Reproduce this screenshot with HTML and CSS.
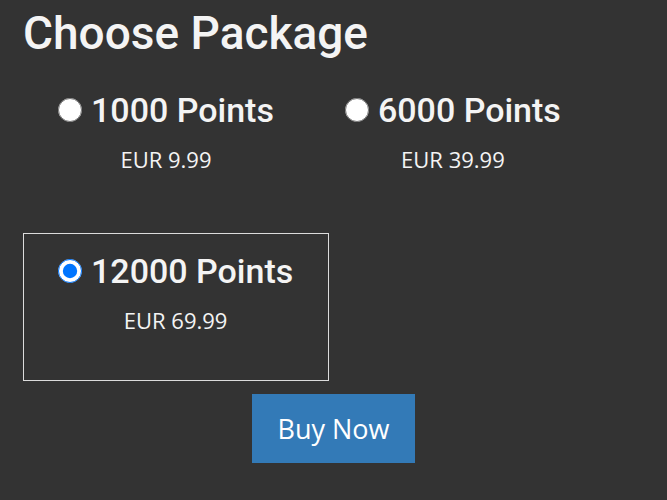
FILE: index.html
```html
<!DOCTYPE html>
<html>
<head>
<meta charset="utf-8">
<link rel="stylesheet" href="styles.css">
</head>
<body>
<div class="page">
  <h1 class="title">Choose Package</h1>
  <div class="packages">
    <label class="package">
      <span class="pkg-name"><input type="radio" name="pkg" class="radio"><span>1000 Points</span></span>
      <span class="price">EUR 9.99</span>
    </label>
    <label class="package">
      <span class="pkg-name"><input type="radio" name="pkg" class="radio"><span>6000 Points</span></span>
      <span class="price">EUR 39.99</span>
    </label>
    <label class="package selected">
      <span class="pkg-name"><input type="radio" name="pkg" class="radio" checked><span>12000 Points</span></span>
      <span class="price">EUR 69.99</span>
    </label>
  </div>
  <div class="actions">
    <button class="buy">Buy Now</button>
  </div>
</div>
</body>
</html>
```
FILE: styles.css
```css
html, body {
  margin: 0;
  padding: 0;
  background: #333333;
}
.page {
  padding: 0 23px;
  color: #f4f4f4;
}
.title {
  font-family: Roboto, "Liberation Sans", sans-serif;
  font-weight: 500;
  font-size: 46px;
  line-height: 52px;
  margin: 7px 0 13px;
}
.packages {
  display: flex;
  flex-wrap: wrap;
  row-gap: 13px;
}
.package {
  display: flex;
  flex-direction: column;
  align-items: center;
  padding: 17px 35px 45px 34px;
  border: 1px solid transparent;
}
.package.selected {
  border-color: #dcdcdc;
}
.pkg-name {
  display: flex;
  align-items: center;
  font-family: Roboto, "Liberation Sans", sans-serif;
  font-weight: 500;
  font-size: 34px;
  line-height: 40px;
}
.radio {
  width: 24px;
  height: 24px;
  margin: 0 9px 0 0;
}
.price {
  font-family: "Open Sans", "Noto Sans", sans-serif;
  font-size: 22px;
  line-height: 30px;
  margin-top: 14px;
}
.actions {
  display: flex;
  justify-content: center;
  margin-top: 13px;
}
.buy {
  width: 163px;
  height: 69px;
  border: none;
  background: #337ab7;
  color: #ffffff;
  font-family: "Open Sans", "Noto Sans", sans-serif;
  font-size: 27px;
  padding: 0;
}
```
